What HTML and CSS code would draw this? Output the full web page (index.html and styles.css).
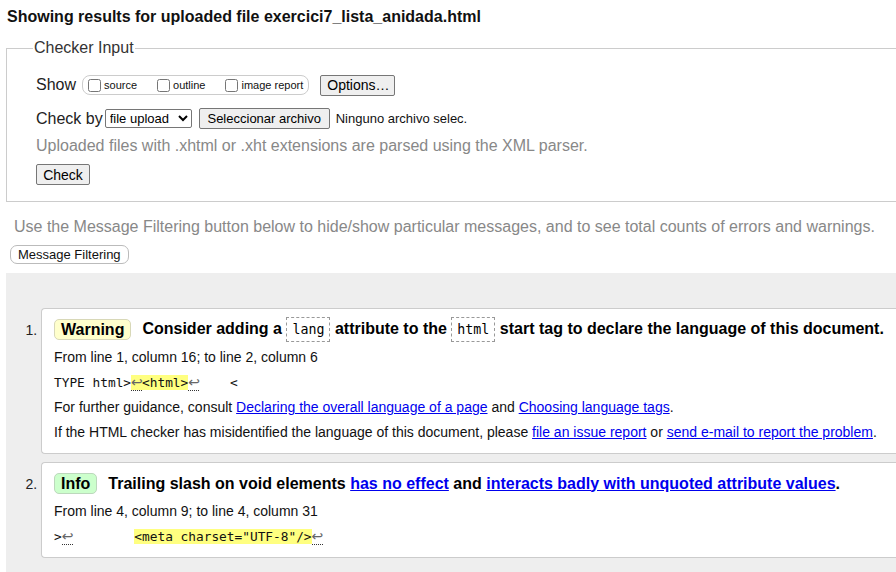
FILE: index.html
```html
<!DOCTYPE html>
<html lang="es">
<head>
<meta charset="utf-8">
<title>Nu Html Checker</title>
<link rel="stylesheet" href="styles.css">
</head>
<body>
<h2 class="title">Showing results for uploaded file exercici7_lista_anidada.html</h2>
<fieldset class="checker">
  <legend class="legend">Checker Input</legend>
  <div class="row row-show">
    <span class="lbl">Show</span>
    <span class="cbgroup">
      <label class="cb"><input type="checkbox"><span>source</span></label>
      <label class="cb"><input type="checkbox"><span>outline</span></label>
      <label class="cb"><input type="checkbox"><span>image report</span></label>
    </span>
    <button class="btn btn-options" type="button">Options…</button>
  </div>
  <div class="row row-check">
    <span class="lbl">Check by</span>
    <select class="sel"><option>file upload</option></select>
    <button class="btn btn-file" type="button">Seleccionar archivo</button>
    <span class="nofile">Ninguno archivo selec.</span>
  </div>
  <p class="hint">Uploaded files with .xhtml or .xht extensions are parsed using the XML parser.</p>
  <div class="row row-submit">
    <button class="btn btn-check" type="button">Check</button>
  </div>
</fieldset>
<p class="filter-hint">Use the Message Filtering button below to hide/show particular messages, and to see total counts of errors and warnings.</p>
<button class="btn-filter" type="button">Message Filtering</button>
<div class="results">
  <ol class="messages">
    <li class="msg">
      <p class="msg-head"><span class="badge badge-warning">Warning</span><span class="msg-text">Consider adding a <code class="tok">lang</code> attribute to the <code class="tok">html</code> start tag to declare the language of this document.</span></p>
      <p class="msg-line">From line 1, column 16; to line 2, column 6</p>
      <p class="msg-line extract"><code>TYPE html&gt;<b class="hl"><i class="lf">↩</i>&lt;html&gt;</b><i class="lf">↩</i>    &lt;</code></p>
      <p class="msg-line">For further guidance, consult <a href="#">Declaring the overall language of a page</a> and <a href="#">Choosing language tags</a>.</p>
      <p class="msg-line">If the HTML checker has misidentified the language of this document, please <a href="#">file an issue report</a> or <a href="#">send e-mail to report the problem</a>.</p>
    </li>
    <li class="msg">
      <p class="msg-head"><span class="badge badge-info">Info</span><span class="msg-text">Trailing slash on void elements <a href="#">has no effect</a> and <a href="#">interacts badly with unquoted attribute values</a>.</span></p>
      <p class="msg-line">From line 4, column 9; to line 4, column 31</p>
      <p class="msg-line extract"><code>&gt;<i class="lf">↩</i>        <b class="hl">&lt;meta charset="UTF-8"/&gt;</b><i class="lf">↩</i></code></p>
    </li>
  </ol>
</div>
</body>
</html>
```

FILE: styles.css
```css
html, body {
  overflow: hidden;
}
body {
  margin: 0;
  width: 1000px;
  font-family: "Liberation Sans", Arial, sans-serif;
  color: #000;
  background: #fff;
}
.title {
  margin: 8px 0 0 7px;
  font-size: 16px;
  line-height: 18px;
  font-weight: bold;
  color: #111;
}
.checker {
  margin: 13px 0 0 6px;
  padding: 0 0 16px 29px;
  border: 1px solid #ccc;
  border-right: none;
}
.legend {
  padding: 0 1px;
  margin-left: -3px;
  font-size: 16px;
  line-height: 18px;
  color: #333;
}
.row {
  display: flex;
  align-items: center;
}
.lbl {
  font-size: 16px;
  color: #222;
}
.row-show {
  margin-top: 17px;
  height: 22px;
}
.cbgroup {
  display: inline-flex;
  align-items: center;
  margin-left: 6px;
  height: 18px;
  padding: 0 5px 0 5px;
  border: 1px solid #ccc;
  border-radius: 8px;
}
.cb {
  display: inline-flex;
  align-items: center;
  font-size: 11px;
  color: #111;
  margin-right: 20px;
}
.cb:last-child {
  margin-right: 0;
}
.cb input {
  width: 13px;
  height: 13px;
  margin: 0 3px 0 0;
}
.btn {
  font-family: "Liberation Sans", Arial, sans-serif;
  font-size: 13px;
  color: #000;
  background: #efefef;
  border: 1px solid #767676;
  border-radius: 2px;
  padding: 0 6px;
  height: 21px;
}
.btn-options {
  margin-left: 11px;
  width: 75px;
  font-size: 14px;
}
.row-check {
  margin-top: 12px;
  height: 21px;
}
.sel {
  margin-left: 2px;
  height: 19px;
  width: 87px;
  font-family: "Liberation Sans", Arial, sans-serif;
  font-size: 13px;
  border: 1px solid #767676;
  border-radius: 2px;
  background: #fff;
  padding: 0;
}
.btn-file {
  margin-left: 7px;
  width: 131px;
}
.nofile {
  margin-left: 6px;
  font-size: 13px;
  color: #111;
}
.hint {
  margin: 8px 0 0;
  font-size: 16px;
  line-height: 18px;
  color: #888;
}
.row-submit {
  margin-top: 9px;
}
.btn-check {
  width: 54px;
  font-size: 14px;
}
.filter-hint {
  margin: 16px 0 0 14px;
  font-size: 16px;
  line-height: 18px;
  color: #888;
}
.btn-filter {
  display: block;
  margin: 9px 0 0 10px;
  height: 19px;
  padding: 0 7px;
  font-family: "Liberation Sans", Arial, sans-serif;
  font-size: 13px;
  color: #111;
  background: #fff;
  border: 1px solid #bbb;
  border-radius: 7px;
}
.results {
  margin: 9px 0 0 6px;
  padding: 35px 0 20px 35px;
  background: #eee;
}
.messages {
  margin: 0;
  padding: 0;
  list-style: decimal outside;
  font-size: 14px;
}
.msg {
  padding: 8px 12px;
  background: #fff;
  border: 1px solid #ccc;
  border-right: none;
  border-radius: 4px 0 0 4px;
}
.msg + .msg {
  margin-top: 8px;
}
.msg::marker {
  font-size: 14px;
  color: #222;
}
.msg p {
  margin: 0;
}
.msg-head {
  display: flex;
  align-items: center;
  height: 25px;
  margin-bottom: 3px !important;
  font-size: 16px;
  font-weight: bold;
  white-space: nowrap;
}
.badge {
  display: inline-block;
  height: 19px;
  line-height: 19px;
  padding: 0 6px;
  border: 1px solid #d8d8b8;
  border-radius: 5px;
  font-weight: bold;
  margin-right: 11px;
}
.badge-warning {
  background: #ffffcc;
}
.badge-info {
  background: #ccffcc;
  border-color: #bcd8bc;
}
.tok {
  display: inline-block;
  height: 23px;
  line-height: 23px;
  padding: 0 5px;
  border: 1px dashed #999;
  font-family: "DejaVu Sans Mono", monospace;
  font-size: 13.3px;
  font-weight: normal;
  vertical-align: middle;
}
.msg-line {
  height: 25px;
  line-height: 25px;
  white-space: pre;
  color: #111;
}
.extract code {
  font-family: "DejaVu Sans Mono", monospace;
  font-size: 12.8px;
  color: #111;
}
.hl {
  font-weight: normal;
  background: #ffff80;
}
.lf {
  display: inline-block;
  width: 11px;
  line-height: 16px;
  font-family: "DejaVu Sans", sans-serif;
  font-size: 14px;
  font-style: normal;
  color: #666;
  border-bottom: 1px dotted #333;
  text-align: left;
}
a {
  color: #0000ee;
  text-decoration: underline;
}
```
